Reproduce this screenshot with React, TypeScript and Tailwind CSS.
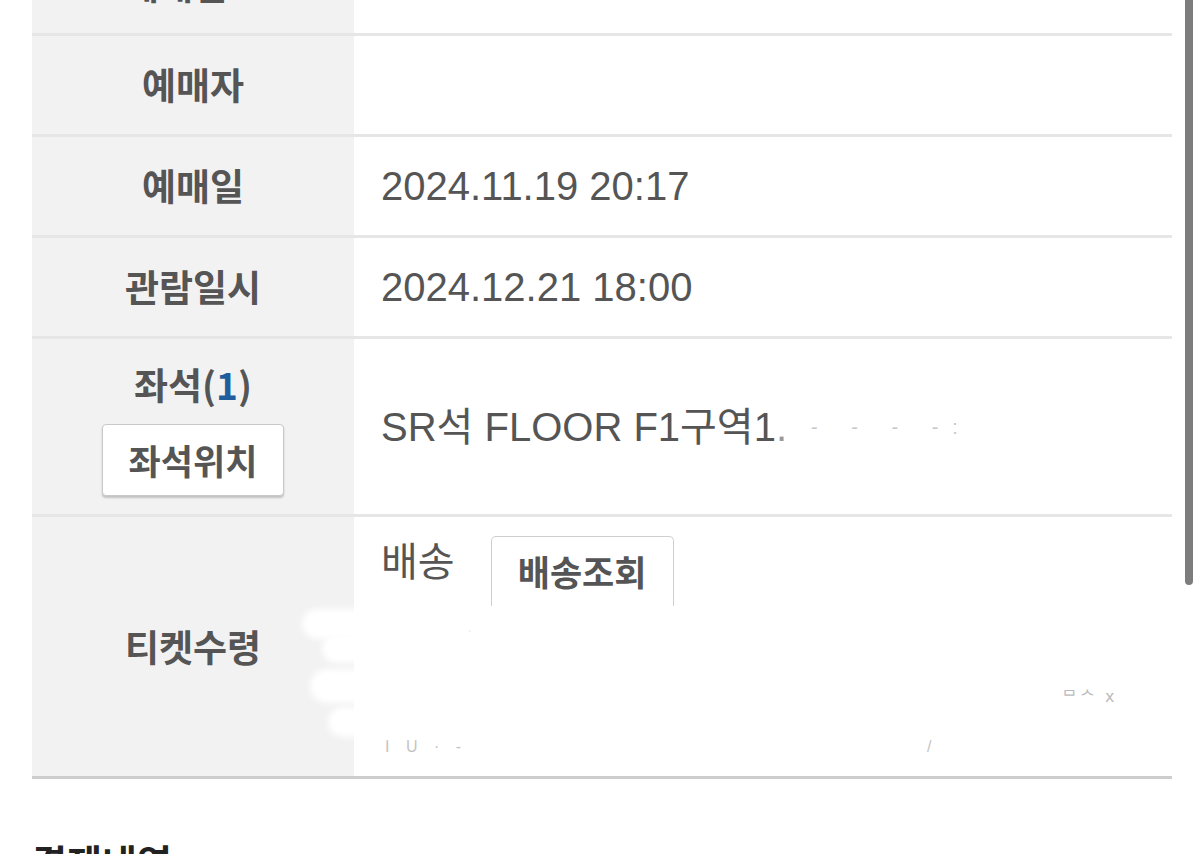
import React from "react"

const label = "font-['Noto_Sans_CJK_KR',sans-serif] font-bold text-[37px] text-[#555]"
const value = "font-['Liberation_Sans','Noto_Sans_CJK_KR',sans-serif] text-[40px] text-[#555]"

type Row = {
  name: string
  text: string
}

const rows: Row[] = [
  { name: "예매자", text: "" },
  { name: "예매일", text: "2024.11.19 20:17" },
  { name: "관람일시", text: "2024.12.21 18:00" },
]

export default function App() {
  return (
    <div className="relative h-[854px] w-[1200px] overflow-hidden bg-white">
      {/* scrollbar */}
      <div className="absolute right-[7px] top-0 h-[585px] w-[8px] rounded-b-full bg-[#7d7d7d]" />

      <div className="ml-[32px] w-[1140px]">
        {/* row cut off at the top */}
        <div className="grid h-[36px] grid-cols-[322px_1fr] overflow-hidden border-b-[3px] border-[#e6e6e6]">
          <div className="flex justify-center bg-[#f2f2f2]">
            <span className={label + " -mt-[36px] leading-[40px]"}>예매번호</span>
          </div>
          <div className="pl-[27px]">
            <span className={value + " -mt-[35px] block leading-[40px] text-[#3f8f7a]"}>T2 8 3 9 5 5 0 9 3</span>
          </div>
        </div>

        {rows.map(r => (
          <div key={r.name} className="grid h-[101px] grid-cols-[322px_1fr] border-b-[3px] border-[#e6e6e6]">
            <div className="flex items-center justify-center bg-[#f2f2f2]">
              <span className={label}>{r.name}</span>
            </div>
            <div className="flex items-center pl-[27px]">
              <span className={value}>{r.text}</span>
            </div>
          </div>
        ))}

        {/* seat */}
        <div className="grid h-[178px] grid-cols-[322px_1fr] border-b-[3px] border-[#e6e6e6]">
          <div className="flex flex-col items-center bg-[#f2f2f2] pt-[25px]">
            <span className={label + " leading-[40px]"}>
              좌석(<span className="text-[#1f5d9c]">1</span>)
            </span>
            <button className="mt-[20px] h-[72px] w-[182px] rounded-[4px] border border-[#c9c9c9] bg-white font-['Noto_Sans_CJK_KR',sans-serif] text-[35px] font-bold text-[#555] shadow-[0_2px_2px_rgba(0,0,0,0.2)]">
              좌석위치
            </button>
          </div>
          <div className="flex items-center pl-[27px]">
            <span className={value}>SR석 FLOOR F1구역1<span className="text-[#999]">.</span></span>
            <span className="ml-[24px] font-['Liberation_Sans',sans-serif] text-[20px] tracking-[14px] text-[#c8c8c8]">- - - -:</span>
          </div>
        </div>

        {/* ticket pickup */}
        <div className="relative grid h-[262px] grid-cols-[322px_1fr] border-b-[3px] border-[#cdcdcd]">
          <div className="flex items-center justify-center bg-[#f2f2f2]">
            <span className={label}>티켓수령</span>
          </div>
          <div className="flex flex-col pl-[27px] pt-[19px]">
            <div className="flex items-start gap-[36px]">
              <span className={value + " mt-[6px] leading-[40px]"}>배송</span>
              <button className="h-[70px] w-[183px] rounded-t-[5px] border-x border-t border-[#cfcfcf] bg-white font-['Noto_Sans_CJK_KR',sans-serif] text-[35px] font-bold text-[#555]">
                배송조회
              </button>
            </div>
            <div className="mt-[14px] pl-[20px] font-['Liberation_Sans',sans-serif] text-[14px] tracking-[4px] text-[#d8d8d8]">· · - · ·</div>
            <div className="mt-[44px] flex justify-between pr-[55px] font-['Liberation_Sans',sans-serif] text-[16px] text-[#bbb]">
              <span>-</span>
              <span className="tracking-[3px]">ᄆᄉ ⅹ</span>
            </div>
            <div className="mt-[26px] flex gap-[200px] pl-[4px] font-['Liberation_Sans',sans-serif] text-[16px] text-[#c4c4c4]">
              <span className="tracking-[6px]">I U · -</span>
              <span className="pl-[260px]">/</span>
            </div>
          </div>
          {/* redaction smudges */}
          <div className="absolute left-[270px] top-[92px] h-[30px] w-[170px] rounded-full bg-white blur-[3px]" />
          <div className="absolute left-[290px] top-[118px] h-[28px] w-[120px] rounded-full bg-white blur-[3px]" />
          <div className="absolute left-[278px] top-[152px] h-[34px] w-[140px] rounded-full bg-white blur-[3px]" />
          <div className="absolute left-[296px] top-[190px] h-[30px] w-[110px] rounded-full bg-white blur-[3px]" />
        </div>

        <h2 className="mt-[58px] font-['Noto_Sans_CJK_KR',sans-serif] text-[38px] font-bold leading-[48px] text-[#222]">결제내역</h2>
      </div>
    </div>
  )
}
